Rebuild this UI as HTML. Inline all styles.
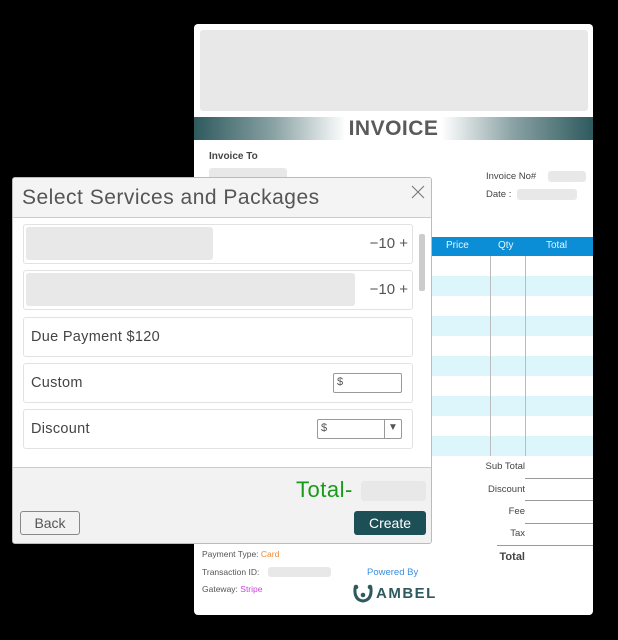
<!DOCTYPE html>
<html><head><style>
*{box-sizing:border-box;margin:0;padding:0}
body{width:618px;height:640px;background:#000;position:relative;overflow:hidden;font-family:"Liberation Sans",sans-serif}
.a{position:absolute}
.inv{left:194px;top:24px;width:399px;height:591px;background:#fff;border-radius:4px}
.g{background:#e8e8e8;border-radius:3px}
.sm{font-size:9.5px;color:#444}
.dlg{left:12px;top:177px;width:420px;height:367px;background:#fff;border:1px solid #bbb;border-radius:3px;overflow:hidden}
.row{position:absolute;left:10px;width:390px;height:40px;border:1px solid #e2e2e2;border-radius:3px;background:#fff}
.lbl{position:absolute;left:7px;top:11px;font-size:14.5px;color:#444;letter-spacing:0.3px}
.q{position:absolute;right:4px;top:10px;font-size:15px;color:#555}
</style></head><body>
<div class="a inv">
 <div class="a g" style="left:6px;top:6px;width:388px;height:81px"></div>
 <div class="a" style="left:0;top:93px;width:399px;height:23px;background:linear-gradient(90deg,#2e5a5e 0%,#8aa2a4 20%,#fff 38%,#fff 62%,#8aa2a4 80%,#2e5a5e 100%)"></div>
 <div class="a" style="left:0;top:93px;width:399px;text-align:center;font-size:21px;font-weight:bold;color:#5a5a5a;line-height:23px;letter-spacing:0.5px">INVOICE</div>
 <div class="a sm" style="left:15px;top:127px;font-weight:bold;font-size:10px">Invoice To</div>
 <div class="a g" style="left:15px;top:144px;width:78px;height:12px"></div>
 <div class="a sm" style="left:292px;top:147px">Invoice No#</div>
 <div class="a g" style="left:354px;top:147px;width:38px;height:11px"></div>
 <div class="a sm" style="left:292px;top:165px">Date :</div>
 <div class="a g" style="left:323px;top:165px;width:60px;height:11px"></div>
 <div class="a" style="left:0;top:213px;width:399px;height:19px;background:#0b8ed6"></div>
 <div class="a" style="left:252px;top:216px;font-size:10px;color:#e8f6ff">Price</div>
 <div class="a" style="left:304px;top:216px;font-size:10px;color:#e8f6ff">Qty</div>
 <div class="a" style="left:352px;top:216px;font-size:10px;color:#e8f6ff">Total</div>
 <div class="a" style="left:0;top:232px;width:399px;height:200px;background:repeating-linear-gradient(180deg,#fff 0,#fff 20px,#dcf6fc 20px,#dcf6fc 40px)"></div>
 <div class="a" style="left:296px;top:232px;width:1px;height:200px;background:#bbb"></div>
 <div class="a" style="left:331px;top:232px;width:1px;height:200px;background:#bbb"></div>
 <div class="a sm" style="left:275px;top:437px;width:56px;text-align:right">Sub Total</div>
 <div class="a sm" style="left:275px;top:460px;width:56px;text-align:right">Discount</div>
 <div class="a sm" style="left:275px;top:482px;width:56px;text-align:right">Fee</div>
 <div class="a sm" style="left:275px;top:504px;width:56px;text-align:right">Tax</div>
 <div class="a sm" style="left:275px;top:527px;width:56px;text-align:right;font-weight:bold;font-size:11px">Total</div>
 <div class="a" style="left:331px;top:454px;width:68px;height:1px;background:#999"></div>
 <div class="a" style="left:331px;top:476px;width:68px;height:1px;background:#999"></div>
 <div class="a" style="left:331px;top:499px;width:68px;height:1px;background:#999"></div>
 <div class="a" style="left:303px;top:521px;width:96px;height:1px;background:#999"></div>
 <div class="a" style="left:8px;top:525px;font-size:8.5px;color:#555">Payment Type: <span style="color:#f08a30">Card</span></div>
 <div class="a" style="left:8px;top:543px;font-size:8.5px;color:#555">Transaction ID:</div>
 <div class="a g" style="left:74px;top:543px;width:63px;height:10px"></div>
 <div class="a" style="left:8px;top:560px;font-size:8.5px;color:#555">Gateway: <span style="color:#d040e0">Stripe</span></div>
 <div class="a" style="left:173px;top:543px;font-size:9.5px;color:#3a8fe0">Powered By</div>
 <svg class="a" style="left:158px;top:558px" width="22" height="22" viewBox="0 0 22 22"><path d="M3 6 Q2 18 11 19 Q20 18 19 6" fill="none" stroke="#2e5a5e" stroke-width="3"/><circle cx="4" cy="5" r="2.3" fill="#2e5a5e"/><circle cx="18" cy="5" r="2.3" fill="#2e5a5e"/><circle cx="11" cy="13" r="2.3" fill="#2e5a5e"/></svg>
 <div class="a" style="left:182px;top:561px;font-size:15px;font-weight:bold;color:#2e5a5e;letter-spacing:1.5px">AMBEL</div>
</div>

<div class="a dlg">
 <div class="a" style="left:0;top:0;width:420px;height:40px;background:#f4f4f4;border-bottom:1px solid #ccc"></div>
 <div class="a" style="left:9px;top:8px;font-size:21px;color:#555;letter-spacing:0.5px">Select Services and Packages</div>
 <svg class="a" style="left:398px;top:7px" width="14" height="14" viewBox="0 0 14 14"><path d="M1 1L13 13M13 1L1 13" stroke="#777" stroke-width="1.1"/></svg>
 <div class="row" style="top:46px"><div class="a g" style="left:2px;top:2px;width:187px;height:33px"></div><div class="q">−10 +</div></div>
 <div class="row" style="top:92px"><div class="a g" style="left:2px;top:2px;width:329px;height:33px"></div><div class="q">−10 +</div></div>
 <div class="row" style="top:139px"><div class="lbl">Due Payment $120</div></div>
 <div class="row" style="top:185px"><div class="lbl">Custom</div><div class="a" style="left:309px;top:9px;width:69px;height:20px;border:1px solid #999;border-radius:2px;font-size:11px;color:#555;padding:2px 3px">$</div></div>
 <div class="row" style="top:231px"><div class="lbl">Discount</div><div class="a" style="left:293px;top:9px;width:85px;height:20px;border:1px solid #999;border-radius:2px;font-size:11px;color:#555;padding:2px 3px">$<div class="a" style="left:66px;top:0;width:1px;height:18px;background:#999"></div><div class="a" style="left:70px;top:2px;font-size:10px;color:#555">▼</div></div></div>
 <div class="a" style="left:406px;top:56px;width:6px;height:57px;background:#ccc;border-radius:2px"></div>
 <div class="a" style="left:0;top:289px;width:420px;height:78px;background:#f2f2f2;border-top:1px solid #ccc"></div>
 <div class="a" style="left:283px;top:299px;font-size:22px;color:#1a9a1a;letter-spacing:0.5px">Total-</div>
 <div class="a g" style="left:348px;top:303px;width:65px;height:20px"></div>
 <div class="a" style="left:7px;top:333px;width:60px;height:24px;border:1px solid #888;border-radius:3px;font-size:14px;color:#555;text-align:center;line-height:22px">Back</div>
 <div class="a" style="left:341px;top:333px;width:72px;height:24px;background:#1d4f57;border-radius:3px;font-size:14px;color:#fff;text-align:center;line-height:24px">Create</div>
</div>
</body></html>
